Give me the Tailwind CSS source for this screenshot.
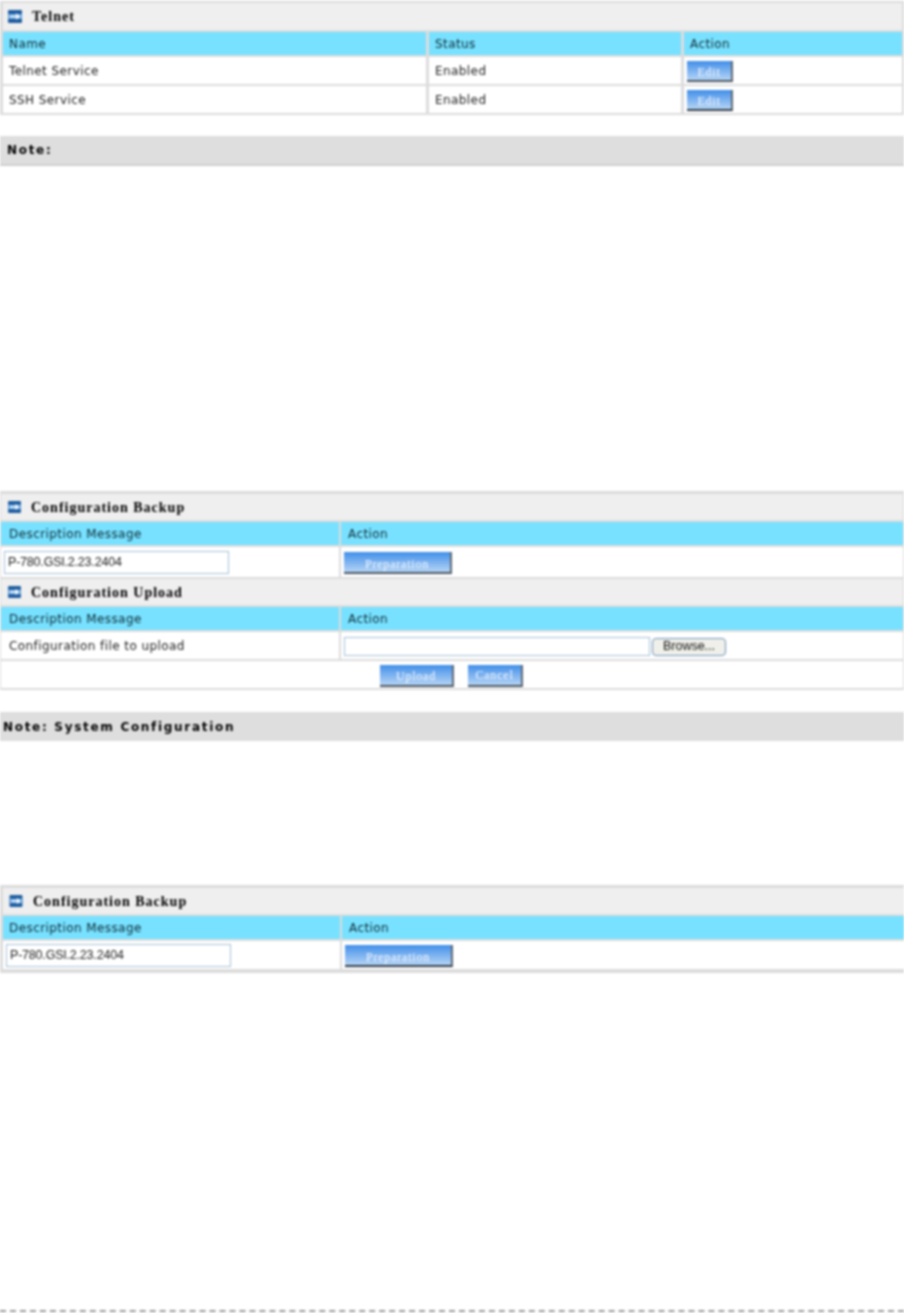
<!DOCTYPE html>
<html>
<head>
<meta charset="utf-8">
<script src="https://cdn.jsdelivr.net/npm/@tailwindcss/browser@4"></script>
</head>
<body class="bg-white">
<div class="w-[904px] h-[1313px] overflow-hidden [filter:blur(0.8px)] font-['DejaVu_Sans',sans-serif] text-[12px] tracking-[0.42px] text-[#222]">

  <!-- Telnet -->
  <div class="mt-[1px] bg-[#dcdcdc] pt-[2px] pb-[2px] pl-[3px] pr-[2px] flex flex-col gap-[2px]">
    <div class="h-[27px] bg-[#efefef] flex items-center pl-[5px] gap-[10px]">
      <svg width="14" height="13" viewBox="0 0 14 13"><rect width="14" height="13" rx="1" fill="#1f5c9e"/><rect y="4" width="14" height="5" fill="#6fa8e0"/><path d="M2 6.5h8M8 4l3 2.5L8 9" stroke="#fff" stroke-width="1.5" fill="none"/></svg>
      <span class="font-['Liberation_Serif',serif] font-bold text-[14px] tracking-[1px] text-[#000]">Telnet</span>
    </div>
    <div class="grid grid-cols-[423px_252px_1fr] gap-x-[3px] gap-y-[2px]">
      <div class="h-[23px] bg-[#78e1ff] pl-[6px] pt-[1px] flex items-center text-[#0c2a34]">Name</div>
      <div class="h-[23px] bg-[#78e1ff] pl-[6px] pt-[1px] flex items-center text-[#0c2a34]">Status</div>
      <div class="h-[23px] bg-[#78e1ff] pl-[6px] pt-[1px] flex items-center text-[#0c2a34]">Action</div>
      <div class="h-[27px] bg-white pl-[6px] pt-[1px] flex items-center">Telnet Service</div>
      <div class="h-[27px] bg-white pl-[6px] pt-[1px] flex items-center">Enabled</div>
      <div class="h-[27px] bg-white pl-[3px] pt-[2px] flex items-center">
        <div class="w-[46px] h-[21px] pt-[3px] flex items-center justify-center bg-gradient-to-b from-[#3f8ee8] to-[#b4d4f5] border-r-2 border-b-2 border-r-[#5f6a74] border-b-[#4a5560] font-['Liberation_Serif',serif] text-[12px] tracking-[0.8px] text-[#f4f8fe]">Edit</div>
      </div>
      <div class="h-[27px] bg-white pl-[6px] pt-[1px] flex items-center">SSH Service</div>
      <div class="h-[27px] bg-white pl-[6px] pt-[1px] flex items-center">Enabled</div>
      <div class="h-[27px] bg-white pl-[3px] pt-[2px] flex items-center">
        <div class="w-[46px] h-[21px] pt-[3px] flex items-center justify-center bg-gradient-to-b from-[#3f8ee8] to-[#b4d4f5] border-r-2 border-b-2 border-r-[#5f6a74] border-b-[#2f3a48] font-['Liberation_Serif',serif] text-[12px] tracking-[0.8px] text-[#f4f8fe]">Edit</div>
      </div>
    </div>
  </div>

  <div class="mt-[21px] h-[30px] bg-[#dedede] border-b-2 border-b-[#cfcfcf] flex items-center pl-[7px] font-bold text-[12px] tracking-[1.7px] text-[#000]">Note:</div>

  <!-- Configuration -->
  <div class="mt-[325px] bg-[#dcdcdc] pt-[3px] pb-[2px] pl-[1px] pr-[1px] flex flex-col gap-[2px]">
    <div class="h-[26px] bg-[#efefef] flex items-center pl-[7px] gap-[10px]">
      <svg width="13" height="12" viewBox="0 0 14 13"><rect width="14" height="13" rx="1" fill="#1f5c9e"/><rect y="4" width="14" height="5" fill="#6fa8e0"/><path d="M2 6.5h8M8 4l3 2.5L8 9" stroke="#fff" stroke-width="1.5" fill="none"/></svg>
      <span class="font-['Liberation_Serif',serif] font-bold text-[14px] tracking-[1px] text-[#000]">Configuration Backup</span>
    </div>
    <div class="grid grid-cols-[338px_1fr] gap-x-[2px] gap-y-[2px]">
      <div class="h-[23px] bg-[#78e1ff] pl-[8px] pt-[1px] flex items-center text-[#0c2a34]">Description Message</div>
      <div class="h-[23px] bg-[#78e1ff] pl-[7px] pt-[1px] flex items-center text-[#0c2a34]">Action</div>
      <div class="h-[30px] bg-white pl-[3px] flex items-center">
        <div class="w-[225px] h-[23px] border border-[#a5bfd8] pl-[3px] flex items-center font-['Liberation_Sans',sans-serif] text-[12.5px] tracking-[-0.2px] text-[#222]">P-780.GSI.2.23.2404</div>
      </div>
      <div class="h-[30px] bg-white pl-[3px] pt-[2px] flex items-center">
        <div class="w-[108px] h-[22px] pt-[3px] flex items-center justify-center bg-gradient-to-b from-[#3f8ee8] to-[#b4d4f5] border-r-2 border-b-2 border-r-[#5f6a74] border-b-[#4a5560] font-['Liberation_Serif',serif] text-[12px] tracking-[0.8px] text-[#f4f8fe]">Preparation</div>
      </div>
    </div>
    <div class="h-[26px] bg-[#efefef] flex items-center pl-[7px] gap-[10px]">
      <svg width="13" height="12" viewBox="0 0 14 13"><rect width="14" height="13" rx="1" fill="#1f5c9e"/><rect y="4" width="14" height="5" fill="#6fa8e0"/><path d="M2 6.5h8M8 4l3 2.5L8 9" stroke="#fff" stroke-width="1.5" fill="none"/></svg>
      <span class="font-['Liberation_Serif',serif] font-bold text-[14px] tracking-[1px] text-[#000]">Configuration Upload</span>
    </div>
    <div class="grid grid-cols-[338px_1fr] gap-x-[2px] gap-y-[2px]">
      <div class="h-[23px] bg-[#78e1ff] pl-[8px] pt-[1px] flex items-center text-[#0c2a34]">Description Message</div>
      <div class="h-[23px] bg-[#78e1ff] pl-[7px] pt-[1px] flex items-center text-[#0c2a34]">Action</div>
      <div class="h-[27px] bg-white pl-[8px] pt-[1px] flex items-center">Configuration file to upload</div>
      <div class="h-[27px] bg-white pl-[3px] pt-[2px] flex items-center gap-[2px]">
        <div class="w-[306px] h-[19px] border border-[#a5bfd8]"></div>
        <div class="w-[74px] h-[18px] rounded-[4px] border border-[#6f93b8] bg-[#f0f0ea] flex items-center justify-center font-['Liberation_Sans',sans-serif] text-[12.5px] tracking-[0px] text-[#111]">Browse...</div>
      </div>
    </div>
    <div class="h-[27px] bg-white pt-[2px] flex items-center justify-center gap-[14px] pr-[1px]">
      <div class="w-[74px] h-[22px] pt-[3px] flex items-center justify-center bg-gradient-to-b from-[#3f8ee8] to-[#b4d4f5] border-r-2 border-b-2 border-r-[#5f6a74] border-b-[#4a5560] font-['Liberation_Serif',serif] text-[12px] tracking-[0.8px] text-[#f4f8fe]">Upload</div>
      <div class="w-[55px] h-[22px] pt-[1px] flex items-center justify-center bg-gradient-to-b from-[#3f8ee8] to-[#b4d4f5] border-r-2 border-b-2 border-r-[#5f6a74] border-b-[#4a5560] font-['Liberation_Serif',serif] text-[12px] tracking-[0.8px] text-[#f4f8fe]">Cancel</div>
    </div>
  </div>

  <div class="mt-[22px] h-[29px] bg-[#dedede] flex items-center pl-[3px] font-bold text-[12px] tracking-[1.7px] text-[#000]">Note: System Configuration</div>

  <!-- Configuration Backup 2 -->
  <div class="mt-[144px] bg-[#dcdcdc] pt-[3px] pb-[4px] pl-[3px] flex flex-col gap-[2px]">
    <div class="h-[26px] bg-[#efefef] flex items-center pl-[6px] gap-[10px]">
      <svg width="14" height="12" viewBox="0 0 14 13"><rect width="14" height="13" rx="1" fill="#1f5c9e"/><rect y="4" width="14" height="5" fill="#6fa8e0"/><path d="M2 6.5h8M8 4l3 2.5L8 9" stroke="#fff" stroke-width="1.5" fill="none"/></svg>
      <span class="font-['Liberation_Serif',serif] font-bold text-[14px] tracking-[1px] text-[#000]">Configuration Backup</span>
    </div>
    <div class="grid grid-cols-[337px_1fr] gap-x-[2px] gap-y-[2px]">
      <div class="h-[23px] bg-[#78e1ff] pl-[6px] pt-[1px] flex items-center text-[#0c2a34]">Description Message</div>
      <div class="h-[23px] bg-[#78e1ff] pl-[7px] pt-[1px] flex items-center text-[#0c2a34]">Action</div>
      <div class="h-[28px] bg-white pl-[3px] flex items-center">
        <div class="w-[225px] h-[23px] border border-[#a5bfd8] pl-[3px] flex items-center font-['Liberation_Sans',sans-serif] text-[12.5px] tracking-[-0.2px] text-[#222]">P-780.GSI.2.23.2404</div>
      </div>
      <div class="h-[28px] bg-white pl-[3px] pt-[2px] flex items-center">
        <div class="w-[108px] h-[22px] pt-[3px] flex items-center justify-center bg-gradient-to-b from-[#3f8ee8] to-[#b4d4f5] border-r-2 border-b-2 border-r-[#5f6a74] border-b-[#2f3a48] font-['Liberation_Serif',serif] text-[12px] tracking-[0.8px] text-[#f4f8fe]">Preparation</div>
      </div>
    </div>
  </div>

  <div class="mt-[337px] border-t-2 border-dashed border-[#999]"></div>
</div>
</body>
</html>
